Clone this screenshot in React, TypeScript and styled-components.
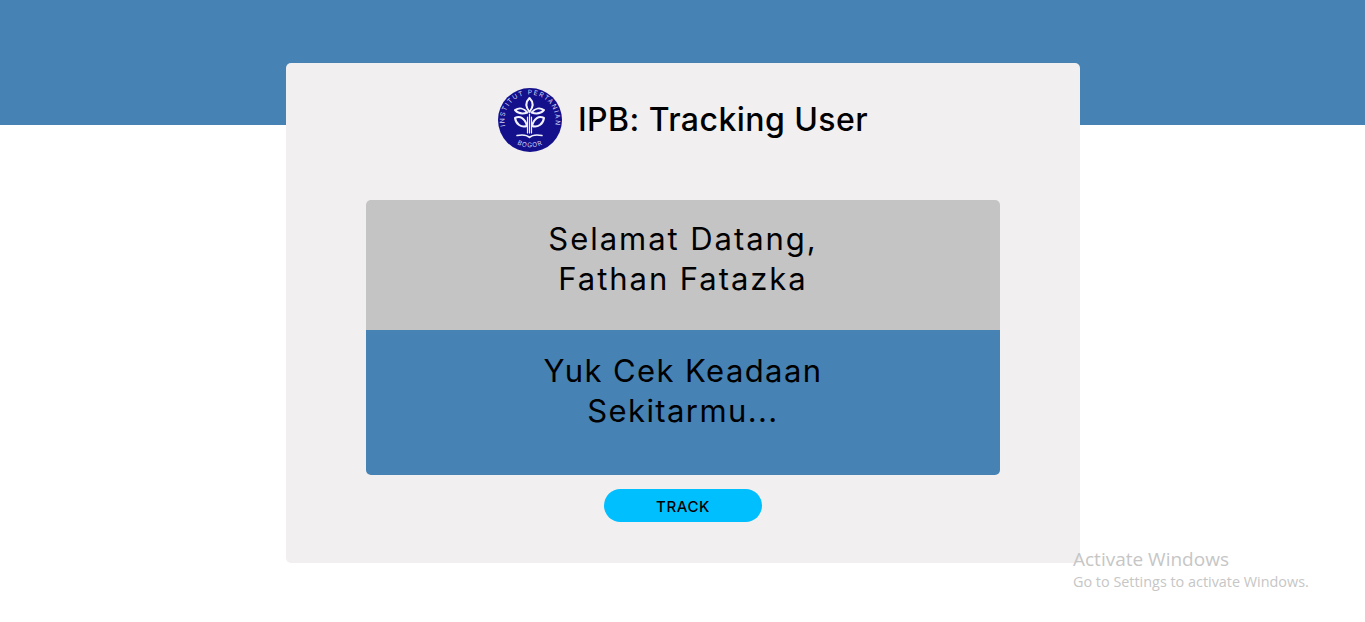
import React from "react";
import styled, { createGlobalStyle } from "styled-components";

const GlobalStyle = createGlobalStyle`
  html, body {
    margin: 0;
    padding: 0;
    background: #fff;
    font-family: Inter, "Open Sans", sans-serif;
    color: #000;
  }
`;

const Page = styled.div`
  position: relative;
  width: 100%;
  height: 622px;
  overflow: hidden;
`;

const Banner = styled.div`
  height: 125px;
  background: #4682b4;
`;

const Card = styled.main`
  box-sizing: border-box;
  width: 794px;
  height: 500px;
  margin: -62px 0 0 286px;
  padding: 25px 80px 0;
  background: #f1eff0;
  border-radius: 5px;
  display: flex;
  flex-direction: column;
  align-items: center;
`;

const Header = styled.header`
  display: flex;
  align-items: center;
  gap: 16px;
  height: 64px;
`;

const Title = styled.h1`
  margin: 0 0 2px;
  font-size: 32px;
  font-weight: 500;
  letter-spacing: 0.45px;
`;

const Panel = styled.section`
  width: 100%;
  margin-top: 48px;
  border-radius: 5px;
  overflow: hidden;
`;

const Block = styled.div<{ $bg: string; $height: number; $top: number; $spacing: number }>`
  box-sizing: border-box;
  height: ${(p) => p.$height}px;
  padding-top: ${(p) => p.$top}px;
  background: ${(p) => p.$bg};
  text-align: center;
  font-size: 31px;
  line-height: 40px;
  font-weight: 400;
  letter-spacing: ${(p) => p.$spacing}px;
`;

const TrackButton = styled.button`
  width: 158px;
  height: 33px;
  margin-top: 14px;
  padding: 2px 0 0;
  border: 0;
  border-radius: 17px;
  background: #00bfff;
  color: #000;
  font-family: inherit;
  font-size: 15px;
  font-weight: 500;
  letter-spacing: 0.6px;
  cursor: pointer;
`;

const Watermark = styled.div`
  position: absolute;
  left: 1073px;
  top: 547px;
  font-family: "Open Sans", sans-serif;
  color: #c6c6c6;
`;

const WatermarkTitle = styled.div`
  font-size: 19px;
  line-height: 24px;
`;

const WatermarkText = styled.div`
  font-size: 14.4px;
  line-height: 21px;
`;

const IpbLogo = () => (
  <svg width="64" height="64" viewBox="0 0 64 64" aria-label="Logo IPB">
    <defs>
      <path id="arcTop" d="M10 45 A25.5 25.5 0 1 1 54 45" />
      <path id="arcBottom" d="M17 55 A28 28 0 0 0 47 55" />
    </defs>
    <circle cx="32" cy="32" r="32" fill="#14108c" />
    <text fill="#d5d5f2" fontFamily="Inter, sans-serif" fontSize="6.6" letterSpacing="1.25">
      <textPath href="#arcTop" startOffset="50%" textAnchor="middle">
        INSTITUT PERTANIAN
      </textPath>
    </text>
    <text fill="#d5d5f2" fontFamily="Inter, sans-serif" fontSize="6.4" letterSpacing="0.8">
      <textPath href="#arcBottom" startOffset="50%" textAnchor="middle">
        BOGOR
      </textPath>
    </text>
    <g fill="none" stroke="#f2f2ff" strokeWidth="2" strokeLinecap="round" strokeLinejoin="round">
      <path d="M31.5 10 C27.5 14 27.5 19 31.5 24 C35.5 19 35.5 14 31.5 10 Z" />
      <path d="M17 22 C21 19.5 26 20 29.5 24.5 C25 26 20 25.5 17 22 Z" />
      <path d="M46 22 C42 19.5 37 20 33.5 24.5 C38 26 43 25.5 46 22 Z" />
      <path d="M17 30 C22 27.5 27 30 29 38 C23 40 18 36 17 30 Z" />
      <path d="M46 30 C41 27.5 36 30 34 38 C40 40 45 36 46 30 Z" />
      <path d="M29.5 29 V45 M31.5 26 V45 M33.5 29 V45" strokeWidth="1.2" />
      <path d="M19 47.5 C24 46.5 29 47 31.5 49.5 C34 47 39 46.5 44 47.5" strokeWidth="1.5" />
    </g>
  </svg>
);

export default function App() {
  return (
    <Page>
      <GlobalStyle />
      <Banner />
      <Card>
        <Header>
          <IpbLogo />
          <Title>IPB: Tracking User</Title>
        </Header>
        <Panel>
          <Block $bg="#c4c4c4" $height={130} $top={19} $spacing={1.95}>
            Selamat Datang,
            <br />
            Fathan Fatazka
          </Block>
          <Block $bg="#4682b4" $height={145} $top={21} $spacing={1.4}>
            Yuk Cek Keadaan
            <br />
            Sekitarmu...
          </Block>
        </Panel>
        <TrackButton>TRACK</TrackButton>
      </Card>
      <Watermark>
        <WatermarkTitle>Activate Windows</WatermarkTitle>
        <WatermarkText>Go to Settings to activate Windows.</WatermarkText>
      </Watermark>
    </Page>
  );
}
